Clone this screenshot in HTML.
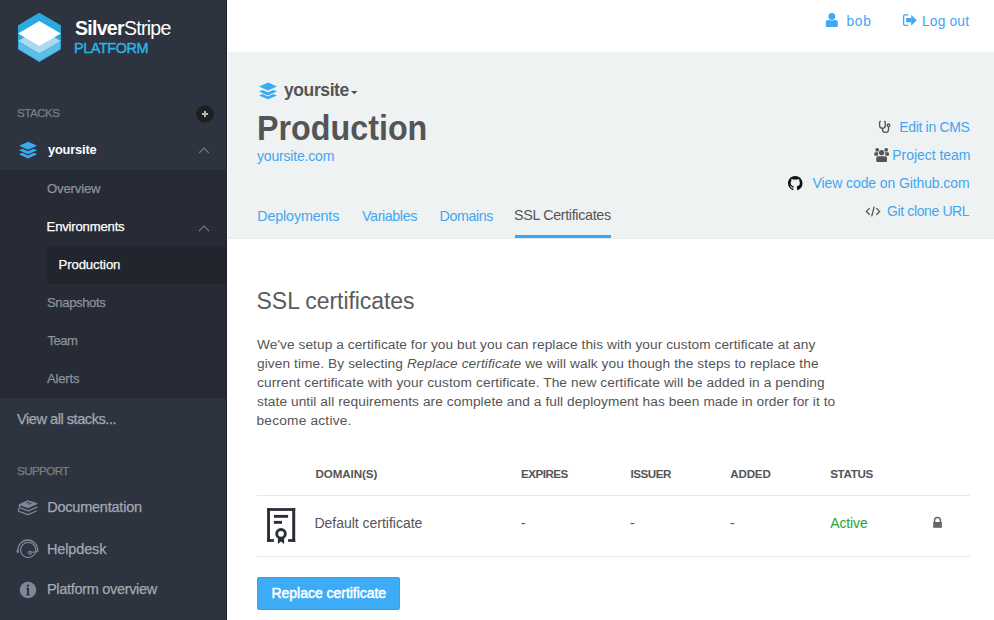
<!DOCTYPE html>
<html><head><meta charset="utf-8"><title>SSL Certificates</title>
<style>
html,body{margin:0;padding:0;}
body{width:994px;height:620px;position:relative;overflow:hidden;background:#fff;font-family:"Liberation Sans",sans-serif;}
.t{position:absolute;line-height:1;white-space:nowrap;}
.r{position:absolute;}
svg{position:absolute;overflow:visible;}
</style></head><body>
<!-- sidebar -->
<div class="r" style="left:0;top:0;width:226px;height:620px;background:#2d333f;"></div>
<div class="r" style="left:226px;top:0;width:1px;height:620px;background:#1d2128;"></div>
<div class="r" style="left:0;top:170px;width:226px;height:228px;background:#262b35;"></div>
<div class="r" style="left:47px;top:246px;width:179px;height:38px;background:#21252d;"></div>
<!-- header / grey band -->
<div class="r" style="left:228px;top:52px;width:766px;height:186px;background:#eff2f3;"></div>
<div class="r" style="left:228px;top:238px;width:766px;height:1px;background:#e7e9ea;"></div>
<div class="r" style="left:515px;top:235px;width:96px;height:3px;background:#35a8f5;"></div>
<!-- table lines -->
<div class="r" style="left:257px;top:495px;width:713px;height:1px;background:#e9e9e9;"></div>
<div class="r" style="left:257px;top:556px;width:713px;height:1px;background:#e9e9e9;"></div>
<!-- button -->
<div class="r" style="left:257px;top:577px;width:143px;height:33px;background:#3eabf6;border-radius:3px;box-shadow:inset 0 0 0 1px #2ea2f3;"></div>

<!-- logo -->
<svg style="left:0;top:0" width="80" height="80" viewBox="0 0 80 80">
  <defs><clipPath id="hx"><polygon points="39.3,13.8 59.9,25.8 59.9,49 39.3,61 18.9,49 18.9,25.8" stroke="#000" stroke-width="2.2" stroke-linejoin="round"/></clipPath></defs>
  <polygon points="39.3,14 59.8,25.9 59.8,48.9 39.3,60.8 19.1,48.9 19.1,25.9" fill="#2aaae0" stroke="#2aaae0" stroke-width="2.2" stroke-linejoin="round"/>
  <polygon points="17,40.9 39.3,54 62,40.9 62,70 17,70" fill="#5fbee8" clip-path="url(#hx)"/>
  <polygon points="39.3,28.5 60.8,41 39.3,53.6 18.1,41" fill="#a9daf0"/>
  <polygon points="39.3,21 60.8,33.5 39.3,46.1 18.1,33.5" fill="#ffffff"/>
</svg>
<!-- sidebar stack icon -->
<svg style="left:0;top:120px" width="60" height="60" viewBox="0 0 60 60">
  <g fill="#3aaaf0">
  <polygon points="19,25.8 28.2,21.8 37.2,25.8 28,29.8"/>
  <polygon points="19,30.2 22.3,28.7 28,31.3 33.8,28.7 37.2,30.2 28,34.3"/>
  <polygon points="19,34.3 22.3,32.8 28,35.4 33.8,32.8 37.2,34.3 28,38.4"/>
  </g>
</svg>
<!-- plus circle -->
<svg style="left:192px;top:102px" width="26" height="26" viewBox="0 0 26 26">
  <circle cx="12.9" cy="11.9" r="8.8" fill="#1e1f23"/>
  <rect x="9.9" y="11" width="6.2" height="2" fill="#b5b5b5"/>
  <rect x="12" y="8.9" width="1.9" height="6.2" fill="#b5b5b5"/>
</svg>
<!-- chevrons -->
<svg style="left:190px;top:140px" width="30" height="100" viewBox="0 0 30 100">
  <polyline points="9,13 14,8 19,13" fill="none" stroke="#737986" stroke-width="1.1"/>
  <polyline points="9,91 14,86 19,91" fill="none" stroke="#737986" stroke-width="1.1"/>
</svg>
<!-- book icon -->
<svg style="left:14px;top:495px" width="30" height="30" viewBox="0 0 30 30">
  <g fill="none" stroke="#7e8796" stroke-width="1.3" stroke-linejoin="round" stroke-linecap="round">
  <polygon points="5.8,9.6 14,5.9 22.8,8.6 14.2,12.4" fill="#7e8796"/>
  <path d="M5.8,9.6 Q4.6,11.8 6.2,12.8 L14.2,15.8 L23,12.2"/>
  <path d="M4.9,13.6 Q3.6,15.8 5.6,16.6 L14,19.7 L22.4,16"/>
  </g>
  <g stroke="#2d333f" stroke-width="0.9">
  <line x1="12.6" y1="8.2" x2="15.6" y2="7"/>
  <line x1="14.4" y1="9.4" x2="17.6" y2="8.1"/>
  </g>
</svg>
<!-- headset icon -->
<svg style="left:14px;top:535px" width="30" height="30" viewBox="0 0 30 30">
  <g fill="none" stroke="#7e8796" stroke-width="1.3">
  <path d="M3.8,16.6 L3.8,15.8 A10,10.8 0 0 1 23.8,15.8 L23.8,16.8"/>
  <circle cx="14.2" cy="15" r="7.6"/>
  <line x1="17.4" y1="17.4" x2="23.8" y2="16.6"/>
  <circle cx="16" cy="17.7" r="1.4"/>
  </g>
  <ellipse cx="3.7" cy="16.2" rx="1.1" ry="1.9" fill="#7e8796"/>
</svg>
<!-- info icon -->
<svg style="left:14px;top:575px" width="30" height="30" viewBox="0 0 30 30">
  <circle cx="14" cy="15" r="8.3" fill="#7f8898"/>
  <circle cx="14" cy="10.6" r="1.2" fill="#2e333e"/>
  <rect x="13" y="12.8" width="2" height="7" fill="#2e333e"/>
  <rect x="12" y="12.8" width="2" height="1" fill="#2e333e"/>
  <rect x="12" y="19.5" width="4" height="1" fill="#2e333e"/>
</svg>
<!-- user icon -->
<svg style="left:820px;top:8px" width="24" height="24" viewBox="0 0 24 24">
  <circle cx="11.8" cy="8.5" r="3.4" fill="#3fa9f5"/>
  <path d="M5.8,14.2 Q5.8,12 8,12 L9.5,12 Q11.8,13.2 14,12 L15.6,12 Q17.8,12 17.8,14.2 L17.8,18 Q17.8,19 16.8,19 L6.8,19 Q5.8,19 5.8,18 Z" fill="#3fa9f5"/>
</svg>
<!-- logout icon -->
<svg style="left:898px;top:8px" width="24" height="24" viewBox="0 0 24 24">
  <path d="M10.3,6.9 L7,6.9 Q5.6,6.9 5.6,8.3 L5.6,15.9 Q5.6,17.3 7,17.3 L10.3,17.3" fill="none" stroke="#3fa9f5" stroke-width="1.3"/>
  <rect x="8.1" y="10" width="5.3" height="4.3" fill="#3fa9f5"/>
  <polygon points="13.2,7 18.8,12.2 13.2,17.8" fill="#3fa9f5"/>
</svg>
<!-- band stack icon -->
<svg style="left:254px;top:78px" width="28" height="26" viewBox="0 0 28 26">
  <g fill="#3aaaf2">
  <polygon points="5,8.4 14.2,4.6 23,8.4 13.8,12.4"/>
  <polygon points="5,13.4 8.4,11.9 13.8,14.3 19.5,11.9 23,13.4 13.8,17.5"/>
  <polygon points="5,17.5 8.4,16 13.8,18.4 19.5,16 23,17.5 13.8,21.3"/>
  </g>
</svg>
<!-- caret -->
<svg style="left:348px;top:86px" width="12" height="12" viewBox="0 0 12 12">
  <polygon points="3,5 9.5,5 6.25,8.2" fill="#4d4d4d"/>
</svg>
<!-- stethoscope -->
<svg style="left:872px;top:116px" width="24" height="22" viewBox="0 0 24 22">
  <g fill="none" stroke="#555" stroke-width="1.3" stroke-linecap="round">
  <path d="M8.4,5.3 Q7.6,5.5 7.6,6.5 L7.6,9.6 Q7.6,12.4 10.5,12.4 Q13.3,12.4 13.3,9.6 L13.3,6.5 Q13.3,5.5 12.5,5.3"/>
  <path d="M10.5,12.4 L10.5,13.8 Q10.5,16.4 13.5,16.4 Q16.5,16.4 16.5,13.8 L16.5,10.6"/>
  <circle cx="16.5" cy="9.3" r="1.3"/>
  </g>
</svg>
<!-- team icon -->
<svg style="left:870px;top:143px" width="24" height="24" viewBox="0 0 24 24">
  <g fill="#555">
  <circle cx="11.6" cy="9.7" r="2.6"/>
  <path d="M6.2,15 Q6.2,13.2 8,13.2 L15.2,13.2 Q17,13.2 17,15 L17,17.8 Q17,19 15.8,19 L7.4,19 Q6.2,19 6.2,17.8 Z"/>
  <circle cx="7.2" cy="6.8" r="1.9"/>
  <path d="M4.3,10.5 Q4.3,9.3 5.5,9.3 L8.6,9.3 Q7.6,10.6 8,12.8 L5.3,12.8 Q4.3,12.8 4.3,11.8 Z"/>
  <circle cx="16.2" cy="6.8" r="1.9"/>
  <path d="M19,10.5 Q19,9.3 17.8,9.3 L14.7,9.3 Q15.7,10.6 15.3,12.8 L18,12.8 Q19,12.8 19,11.8 Z"/>
  </g>
</svg>
<!-- github -->
<svg style="left:788px;top:176px" width="14.5" height="14.5" viewBox="0 0 16 16">
  <path fill="#111" d="M8 0C3.58 0 0 3.58 0 8c0 3.54 2.29 6.53 5.47 7.59.4.07.55-.17.55-.38 0-.19-.01-.82-.01-1.49-2.01.37-2.53-.49-2.69-.94-.09-.23-.48-.94-.82-1.13-.28-.15-.68-.52-.01-.53.63-.01 1.08.58 1.23.82.72 1.21 1.87.87 2.33.66.07-.52.28-.87.51-1.07-1.78-.2-3.64-.89-3.64-3.95 0-.87.31-1.59.82-2.15-.08-.2-.36-1.02.08-2.12 0 0 .67-.21 2.2.82.64-.18 1.32-.27 2-.27.68 0 1.36.09 2 .27 1.53-1.04 2.2-.82 2.2-.82.44 1.1.16 1.92.08 2.12.51.56.82 1.27.82 2.15 0 3.07-1.87 3.75-3.65 3.95.29.25.54.73.54 1.48 0 1.07-.01 1.93-.01 2.2 0 .21.15.46.55.38A8.013 8.013 0 0016 8c0-4.42-3.58-8-8-8z"/>
</svg>
<!-- code icon -->
<svg style="left:861px;top:200px" width="24" height="24" viewBox="0 0 24 24">
  <g fill="none" stroke="#555" stroke-width="1.3">
  <polyline points="8.7,8.1 5.4,11.4 8.7,14.7"/>
  <polyline points="15.3,8.1 18.6,11.4 15.3,14.7"/>
  <line x1="13.2" y1="6.6" x2="10.7" y2="16.3"/>
  </g>
</svg>
<!-- certificate -->
<svg style="left:262px;top:504px" width="38" height="42" viewBox="0 0 38 42">
  <g fill="#2a2f39">
  <rect x="5.1" y="4.1" width="28.1" height="2.8"/>
  <rect x="5.1" y="4.1" width="2.9" height="33.8"/>
  <rect x="30.2" y="4.1" width="3" height="33.8"/>
  <rect x="5.1" y="35.1" width="6.8" height="2.8"/>
  <rect x="26.1" y="35.1" width="7.1" height="2.8"/>
  <rect x="11.9" y="10.9" width="14.2" height="2.9"/>
  <rect x="11.9" y="16.9" width="8.1" height="2.9"/>
  <polygon points="15.9,33 22.1,33 22.1,40 19,37.6 15.9,40"/>
  </g>
  <circle cx="19" cy="29.8" r="4.3" fill="none" stroke="#2a2f39" stroke-width="2.9"/>
</svg>
<!-- lock -->
<svg style="left:926px;top:510px" width="24" height="24" viewBox="0 0 24 24">
  <path d="M8.6,12 L8.6,10.3 A2.9,2.9 0 0 1 14.4,10.3 L14.4,12" fill="none" stroke="#666" stroke-width="1.5"/>
  <rect x="7.2" y="12" width="8.7" height="5.8" fill="#666"/>
</svg>

<div class="t" style="left:75.00px;top:19px;font-size:19.5px;color:#ffffff;letter-spacing:-0.709px;"><b>Silver</b>Stripe</div>
<div class="t" style="left:74.00px;top:41px;font-size:14.4px;color:#2fb1e6;letter-spacing:-0.414px;-webkit-text-stroke:0.45px #2fb1e6;">PLATFORM</div>
<div class="t" style="left:17.00px;top:107px;font-size:11.6px;color:#7b8089;letter-spacing:-0.520px;-webkit-text-stroke:0.25px currentColor;">STACKS</div>
<div class="t" style="left:48.00px;top:144px;font-size:12.8px;color:#ffffff;font-weight:700;letter-spacing:-0.157px;">yoursite</div>
<div class="t" style="left:47.00px;top:182px;font-size:13.1px;color:#8d9199;letter-spacing:-0.143px;-webkit-text-stroke:0.25px currentColor;">Overview</div>
<div class="t" style="left:46.60px;top:220px;font-size:13.1px;color:#ffffff;letter-spacing:-0.182px;-webkit-text-stroke:0.25px currentColor;">Environments</div>
<div class="t" style="left:58.50px;top:258px;font-size:13.1px;color:#ffffff;letter-spacing:-0.078px;-webkit-text-stroke:0.25px currentColor;">Production</div>
<div class="t" style="left:47.00px;top:296px;font-size:13.1px;color:#8d9199;letter-spacing:-0.388px;-webkit-text-stroke:0.25px currentColor;">Snapshots</div>
<div class="t" style="left:47.40px;top:334px;font-size:13.1px;color:#8d9199;letter-spacing:-0.533px;-webkit-text-stroke:0.25px currentColor;">Team</div>
<div class="t" style="left:47.00px;top:372px;font-size:13.1px;color:#8d9199;letter-spacing:-0.200px;-webkit-text-stroke:0.25px currentColor;">Alerts</div>
<div class="t" style="left:17.00px;top:412px;font-size:14.6px;color:#a3a8b0;letter-spacing:-0.476px;-webkit-text-stroke:0.25px currentColor;">View all stacks...</div>
<div class="t" style="left:17.00px;top:465px;font-size:11.6px;color:#7b8089;letter-spacing:-0.583px;-webkit-text-stroke:0.25px currentColor;">SUPPORT</div>
<div class="t" style="left:47.25px;top:500px;font-size:14.5px;color:#a3a8b0;letter-spacing:-0.229px;-webkit-text-stroke:0.25px currentColor;">Documentation</div>
<div class="t" style="left:47.00px;top:542px;font-size:14.5px;color:#a3a8b0;letter-spacing:-0.143px;-webkit-text-stroke:0.25px currentColor;">Helpdesk</div>
<div class="t" style="left:47.00px;top:582px;font-size:14.5px;color:#a3a8b0;letter-spacing:-0.312px;-webkit-text-stroke:0.25px currentColor;">Platform overview</div>
<div class="t" style="left:846.50px;top:15px;font-size:13.8px;color:#3fa6ef;letter-spacing:0.650px;">bob</div>
<div class="t" style="left:922.00px;top:15px;font-size:13.8px;color:#3fa6ef;letter-spacing:0.167px;">Log out</div>
<div class="t" style="left:284.00px;top:82px;font-size:17.5px;color:#555555;font-weight:700;letter-spacing:-0.400px;">yoursite</div>
<div class="t" style="left:256.79px;top:111px;font-size:35.6px;color:#555555;font-weight:700;transform:scaleX(0.9071);transform-origin:0 0;">Production</div>
<div class="t" style="left:257.00px;top:149px;font-size:14px;color:#3fa6ef;letter-spacing:-0.182px;">yoursite.com</div>
<div class="t" style="left:257.20px;top:209px;font-size:14.3px;color:#3fa6ef;letter-spacing:-0.130px;">Deployments</div>
<div class="t" style="left:362.00px;top:209px;font-size:14.3px;color:#3fa6ef;letter-spacing:-0.400px;">Variables</div>
<div class="t" style="left:439.50px;top:209px;font-size:14.3px;color:#3fa6ef;letter-spacing:-0.417px;">Domains</div>
<div class="t" style="left:514.00px;top:208px;font-size:14.3px;color:#555555;letter-spacing:-0.327px;">SSL Certificates</div>
<div class="t" style="left:899.30px;top:120px;font-size:14px;color:#3fa6ef;letter-spacing:-0.340px;">Edit in CMS</div>
<div class="t" style="left:892.30px;top:148px;font-size:14px;color:#3fa6ef;letter-spacing:-0.036px;">Project team</div>
<div class="t" style="left:812.60px;top:176px;font-size:14px;color:#3fa6ef;letter-spacing:-0.105px;">View code on Github.com</div>
<div class="t" style="left:887.00px;top:204px;font-size:14px;color:#3fa6ef;letter-spacing:-0.375px;">Git clone URL</div>
<div class="t" style="left:256.60px;top:290px;font-size:23px;color:#5c5c5c;letter-spacing:-0.067px;">SSL certificates</div>
<div class="t" style="left:257.00px;top:338px;font-size:13.7px;color:#555555;letter-spacing:0.063px;">We've setup a certificate for you but you can replace this with your custom certificate at any</div>
<div class="t" style="left:257.00px;top:357px;font-size:13.7px;color:#555555;letter-spacing:0.092px;">given time. By selecting <i>Replace certificate</i> we will walk you though the steps to replace the</div>
<div class="t" style="left:257.00px;top:376px;font-size:13.7px;color:#555555;letter-spacing:0.100px;">current certificate with your custom certificate. The new certificate will be added in a pending</div>
<div class="t" style="left:257.00px;top:395px;font-size:13.7px;color:#555555;letter-spacing:0.080px;">state until all requirements are complete and a full deployment has been made in order for it to</div>
<div class="t" style="left:256.50px;top:414px;font-size:13.7px;color:#555555;letter-spacing:0.213px;">become active.</div>
<div class="t" style="left:315.40px;top:468px;font-size:11.6px;color:#555555;font-weight:700;letter-spacing:-0.075px;">DOMAIN(S)</div>
<div class="t" style="left:521.10px;top:468px;font-size:11.6px;color:#555555;font-weight:700;letter-spacing:-0.517px;">EXPIRES</div>
<div class="t" style="left:630.40px;top:468px;font-size:11.6px;color:#555555;font-weight:700;letter-spacing:-0.440px;">ISSUER</div>
<div class="t" style="left:730.20px;top:468px;font-size:11.6px;color:#555555;font-weight:700;letter-spacing:-0.150px;">ADDED</div>
<div class="t" style="left:830.20px;top:468px;font-size:11.6px;color:#555555;font-weight:700;letter-spacing:-0.300px;">STATUS</div>
<div class="t" style="left:314.40px;top:516px;font-size:14px;color:#555555;letter-spacing:-0.011px;">Default certificate</div>
<div class="t" style="left:521.00px;top:516px;font-size:14px;color:#555555;">-</div>
<div class="t" style="left:630.00px;top:516px;font-size:14px;color:#555555;">-</div>
<div class="t" style="left:730.00px;top:516px;font-size:14px;color:#555555;">-</div>
<div class="t" style="left:830.20px;top:516px;font-size:14px;color:#26a62b;letter-spacing:-0.120px;">Active</div>
<div class="t" style="left:271.50px;top:586px;font-size:14px;color:#ffffff;letter-spacing:-0.028px;-webkit-text-stroke:0.5px #fff;">Replace certificate</div>
</body></html>
